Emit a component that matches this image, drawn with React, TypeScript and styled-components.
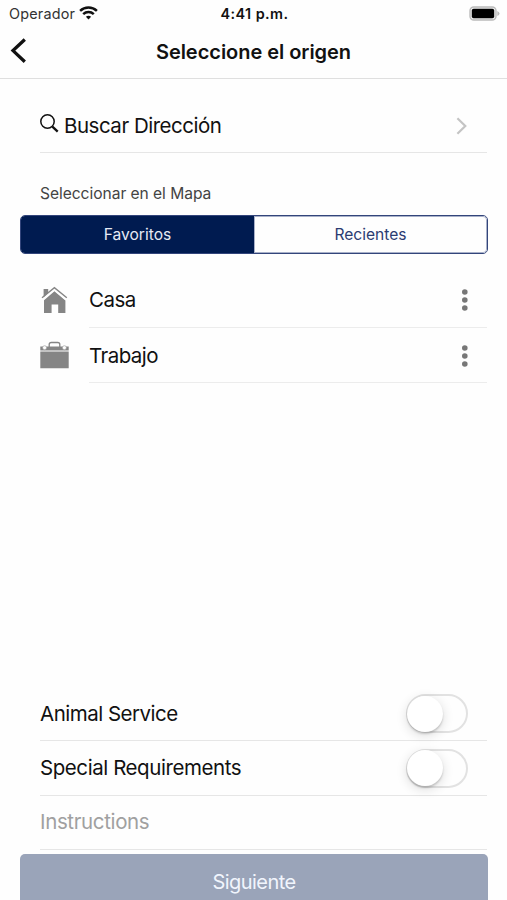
import React, { useState } from "react";
import styled, { createGlobalStyle } from "styled-components";

const Global = createGlobalStyle`
  * { box-sizing: border-box; }
  body {
    margin: 0;
    overflow: hidden;
    background: #fefefe;
    color: #111;
    font-family: Inter, "Liberation Sans", sans-serif;
  }
  button { font: inherit; color: inherit; background: none; border: 0; padding: 0; }
  svg { display: block; flex: none; }
`;

const Screen = styled.div`
  width: 507px;
  height: 900px;
  overflow: hidden;
  display: flex;
  flex-direction: column;
`;

const Label = styled.span<{ $size: number; $track?: number; $weight?: number; $color?: string }>`
  font-size: ${(p) => p.$size}px;
  letter-spacing: ${(p) => p.$track ?? 0}px;
  font-weight: ${(p) => p.$weight ?? 400};
  color: ${(p) => p.$color ?? "#111"};
  line-height: 26px;
  white-space: nowrap;
`;

const StatusBar = styled.div`
  height: 27px;
  padding: 0 7px 0 9px;
  display: grid;
  grid-template-columns: 1fr auto 1fr;
  align-items: center;
`;

const Carrier = styled.div`
  display: flex;
  align-items: center;
  gap: 4px;

  svg { margin-bottom: 2px; }
`;

const Battery = styled.div`
  justify-self: end;
`;

const NavBar = styled.header`
  height: 52px;
  padding: 0 10px 2px;
  display: grid;
  grid-template-columns: 1fr auto 1fr;
  align-items: center;
  border-bottom: 1px solid #dfdfdf;

  svg { margin-bottom: 2px; }
`;

const SearchRow = styled.button`
  height: 74px;
  margin: 0 20px 0 40px;
  padding: 20px 20px 0 0;
  display: flex;
  align-items: center;
  border-bottom: 1px solid #e6e6e6;
  gap: 5px;
  text-align: left;

  svg:first-child { margin-bottom: 4px; }
  svg:last-child { margin-left: auto; }
`;

const SectionTitle = styled.div`
  height: 62px;
  padding: 28px 0 0 40px;
`;

const Segments = styled.div`
  height: 39px;
  margin: 0 19px 0 20px;
  display: flex;
  border: 1px solid #33457b;
  border-radius: 5px;
  overflow: hidden;
`;

const Segment = styled.button<{ $active: boolean }>`
  flex: 1;
  display: flex;
  align-items: center;
  justify-content: center;
  border-radius: ${(p) => (p.$active ? "0" : "0 4px 4px 0")};
  background: ${(p) => (p.$active ? "#001b50" : "#fefefe")};
  box-shadow: ${(p) => (p.$active ? "none" : "inset 0 0 0 1px #a9b1c9")};
`;

const Places = styled.div`
  flex: 1;
  padding: 18px 20px 0 40px;
`;

const Place = styled.div`
  height: 55.5px;
  display: grid;
  grid-template-columns: 49px 1fr;
`;

const PlaceBody = styled.div`
  display: flex;
  align-items: center;
  justify-content: space-between;
  border-bottom: 1px solid #ececec;
  padding: 2px 18px 0 0;
`;

const PlaceIcon = styled.div`
  display: flex;
  align-items: center;
`;

const Options = styled.div`
  margin: 0 20px 0 40px;
`;

const Option = styled.div`
  height: 54.3px;
  padding-right: 19px;
  display: flex;
  align-items: center;
  justify-content: space-between;
  border-bottom: 1px solid #e6e6e6;
`;

const Track = styled.button<{ $on: boolean }>`
  width: 62px;
  height: 39px;
  border-radius: 20px;
  border: 2px solid ${(p) => (p.$on ? "#001b50" : "#e2e2e2")};
  background: ${(p) => (p.$on ? "#001b50" : "#fefefe")};
  display: flex;
  align-items: center;
  justify-content: ${(p) => (p.$on ? "flex-end" : "flex-start")};
`;

const Knob = styled.span`
  width: 36px;
  height: 36px;
  margin: 0 -1px;
  border-radius: 50%;
  background: #fff;
  box-shadow: 0 2px 2px rgba(0, 0, 0, 0.16), 0 3px 12px rgba(0, 0, 0, 0.14);
`;

const NextButton = styled.button`
  flex: none;
  height: 55px;
  margin: 4px 19px -9px 20px;
  border-radius: 5px;
  background: #9aa4b9;
`;

const WifiIcon = () => (
  <svg width="19" height="14" viewBox="0 0 19 14" fill="none" stroke="#111" strokeWidth="2.5">
    <path d="M1.1 4.9C5.9.4 13.1.4 17.9 4.9" />
    <path d="M4.2 8.2c3-2.8 7.6-2.8 10.6 0" />
    <path d="M6.9 10.8c1.5-1.4 3.7-1.4 5.2 0L9.5 13.4z" fill="#111" stroke="none" />
  </svg>
);

const BatteryIcon = () => (
  <svg width="31" height="15" viewBox="0 0 31 15">
    <rect x="1" y="1" width="26" height="13" rx="3.8" fill="#eee" stroke="#bbb" strokeWidth="1.4" />
    <rect x="2.8" y="2.8" width="22.4" height="9.4" rx="1.8" fill="#000" />
    <path d="M28.3 5v5q2.2-1 2.2-2.5T28.3 5z" fill="#bbb" />
  </svg>
);

const BackIcon = () => (
  <svg width="17" height="26" viewBox="0 0 17 26" fill="none" stroke="#111" strokeWidth="3.3">
    <path d="M14.8 1.5 3 12.6l11.8 11.1" />
  </svg>
);

const SearchIcon = () => (
  <svg width="19" height="20" viewBox="0 0 19 20" fill="none" stroke="#111" strokeWidth="1.5">
    <circle cx="7.5" cy="7.5" r="6.7" />
    <path d="m12.4 12.6 5.3 5" strokeWidth="2.3" />
  </svg>
);

const ChevronIcon = () => (
  <svg width="11" height="18" viewBox="0 0 11 18" fill="none" stroke="#c4c4c4" strokeWidth="2.2">
    <path d="m1.4 1.2 7.9 7.8-7.9 7.8" />
  </svg>
);

const HouseIcon = () => (
  <svg width="29" height="28" viewBox="0 0 29 28" fill="#858585">
    <path d="M3.6 3h4.6v4L3.6 11.3z" />
    <path d="m14.4 5.2 11 9.3V27h-7.2v-8.5h-6.6V27H4V14.2z" />
    <path d="M2 11.8 14.4 1.6l12.4 10.2" fill="none" stroke="#858585" strokeWidth="1.4" />
    <path d="M3.1 13.6 14.4 4.2l11.3 9.4" fill="none" stroke="#fefefe" strokeWidth="1" />
  </svg>
);

const BriefcaseIcon = () => (
  <svg width="29" height="28" viewBox="0 0 29 28">
    <path d="M9.2 6V3.5Q9.2 1.5 11.3 1.5h6.4q2.1 0 2.1 2V6" fill="none" stroke="#858585" strokeWidth="1.3" />
    <path d="M.3 5.6h28.4v4H.3zM.3 10.6h28.4v16.6H.3z" fill="#858585" />
    <circle cx="4.6" cy="6.7" r="2" fill="#fefefe" stroke="#999" strokeWidth=".6" />
    <circle cx="24.4" cy="6.7" r="2" fill="#fefefe" stroke="#999" strokeWidth=".6" />
  </svg>
);

const MoreIcon = () => (
  <svg width="9" height="24" viewBox="0 0 9 24" fill="#777">
    <circle cx="4.8" cy="4" r="2.8" />
    <circle cx="4.8" cy="12" r="2.8" />
    <circle cx="4.8" cy="20" r="2.8" />
  </svg>
);

function Toggle({ label }: { label: string }) {
  const [on, setOn] = useState(false);
  return (
    <Track role="switch" aria-checked={on} aria-label={label} $on={on} onClick={() => setOn(!on)}>
      <Knob />
    </Track>
  );
}

export default function App() {
  const [tab, setTab] = useState("Favoritos");
  return (
    <Screen>
      <Global />
      <StatusBar>
        <Carrier>
          <Label $size={14.4} $track={0.2} $color="#333">Operador</Label>
          <WifiIcon />
        </Carrier>
        <Label $size={14.4} $track={0.42} $weight={600}>4:41 p.m.</Label>
        <Battery><BatteryIcon /></Battery>
      </StatusBar>
      <NavBar>
        <BackIcon />
        <Label $size={20} $track={-0.04} $weight={600}>Seleccione el origen</Label>
      </NavBar>
      <SearchRow>
        <SearchIcon />
        <Label $size={20.5} $track={-0.48}>Buscar Dirección</Label>
        <ChevronIcon />
      </SearchRow>
      <SectionTitle>
        <Label $size={15.6} $track={-0.05} $color="#444">Seleccionar en el Mapa</Label>
      </SectionTitle>
      <Segments>
        {["Favoritos", "Recientes"].map((name) => (
          <Segment key={name} $active={tab === name} onClick={() => setTab(name)}>
            <Label $size={15.6} $color={tab === name ? "#e6eaf5" : "#2b3c72"}>{name}</Label>
          </Segment>
        ))}
      </Segments>
      <Places>
        <Place>
          <PlaceIcon><HouseIcon /></PlaceIcon>
          <PlaceBody><Label $size={20.5} $track={-0.55}>Casa</Label><MoreIcon /></PlaceBody>
        </Place>
        <Place>
          <PlaceIcon><BriefcaseIcon /></PlaceIcon>
          <PlaceBody><Label $size={20.5} $track={-0.55}>Trabajo</Label><MoreIcon /></PlaceBody>
        </Place>
      </Places>
      <Options>
        <Option><Label $size={20.5} $track={-0.5}>Animal Service</Label><Toggle label="Animal Service" /></Option>
        <Option><Label $size={20.5} $track={-0.43}>Special Requirements</Label><Toggle label="Special Requirements" /></Option>
        <Option><Label $size={20.5} $track={-0.36} $color="#a0a0a0">Instructions</Label></Option>
      </Options>
      <NextButton><Label $size={20} $track={-0.55} $color="#f1f5fd">Siguiente</Label></NextButton>
    </Screen>
  );
}
